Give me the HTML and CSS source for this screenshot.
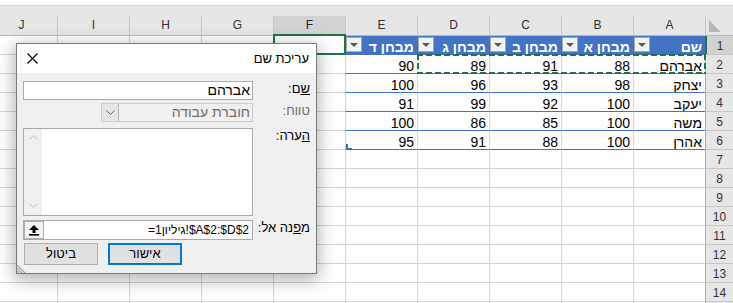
FILE: index.html
```html
<!DOCTYPE html>
<html lang="he">
<head>
<meta charset="utf-8">
<title>עריכת שם</title>
<link rel="stylesheet" href="styles.css">
</head>
<body>
<div class="sheet">
  <div class="strip"></div>
  <div class="band"></div>
  <div class="row colheads">
    <div class="ch">J</div><div class="ch">I</div><div class="ch">H</div><div class="ch">G</div><div class="ch sel">F</div><div class="ch">E</div><div class="ch">D</div><div class="ch">C</div><div class="ch">B</div><div class="ch">A</div>
    <div class="corner"><span class="tri"></span></div>
  </div>

  <div class="row ovl">
    <div class="c"></div><div class="c"></div><div class="c"></div><div class="c"></div><div class="c"></div>
    <div class="c th"><span class="fbtn"><span class="arr"></span></span><span class="tht">מבחן ד</span></div>
    <div class="c th"><span class="fbtn"><span class="arr"></span></span><span class="tht">מבחן ג</span></div>
    <div class="c th"><span class="fbtn"><span class="arr"></span></span><span class="tht">מבחן ב</span></div>
    <div class="c th"><span class="fbtn"><span class="arr"></span></span><span class="tht">מבחן א</span></div>
    <div class="c th"><span class="fbtn"><span class="arr"></span></span><span class="tht">שם</span></div>
    <div class="rh sel">1</div>
    <div class="cursor"></div>
  </div>

  <div class="row ovl">
    <div class="c"></div><div class="c"></div><div class="c"></div><div class="c"></div><div class="c"></div>
    <div class="c td">90</div><div class="c td">89</div><div class="c td">91</div><div class="c td">88</div><div class="c td">אברהם</div>
    <div class="rh">2</div>
    <div class="ants"></div>
  </div>

  <div class="row">
    <div class="c"></div><div class="c"></div><div class="c"></div><div class="c"></div><div class="c"></div>
    <div class="c td">100</div><div class="c td">96</div><div class="c td">93</div><div class="c td">98</div><div class="c td">יצחק</div>
    <div class="rh">3</div>
  </div>

  <div class="row">
    <div class="c"></div><div class="c"></div><div class="c"></div><div class="c"></div><div class="c"></div>
    <div class="c td">91</div><div class="c td">99</div><div class="c td">92</div><div class="c td">100</div><div class="c td">יעקב</div>
    <div class="rh">4</div>
  </div>

  <div class="row">
    <div class="c"></div><div class="c"></div><div class="c"></div><div class="c"></div><div class="c"></div>
    <div class="c td">100</div><div class="c td">86</div><div class="c td">85</div><div class="c td">100</div><div class="c td">משה</div>
    <div class="rh">5</div>
  </div>

  <div class="row">
    <div class="c"></div><div class="c"></div><div class="c"></div><div class="c"></div><div class="c"></div>
    <div class="c td corner-cell">95</div><div class="c td">91</div><div class="c td">88</div><div class="c td">100</div><div class="c td">אהרן</div>
    <div class="rh">6</div>
  </div>

  <div class="row"><div class="c"></div><div class="c"></div><div class="c"></div><div class="c"></div><div class="c"></div><div class="c"></div><div class="c"></div><div class="c"></div><div class="c"></div><div class="c"></div><div class="rh">7</div></div>
  <div class="row"><div class="c"></div><div class="c"></div><div class="c"></div><div class="c"></div><div class="c"></div><div class="c"></div><div class="c"></div><div class="c"></div><div class="c"></div><div class="c"></div><div class="rh">8</div></div>
  <div class="row"><div class="c"></div><div class="c"></div><div class="c"></div><div class="c"></div><div class="c"></div><div class="c"></div><div class="c"></div><div class="c"></div><div class="c"></div><div class="c"></div><div class="rh">9</div></div>
  <div class="row"><div class="c"></div><div class="c"></div><div class="c"></div><div class="c"></div><div class="c"></div><div class="c"></div><div class="c"></div><div class="c"></div><div class="c"></div><div class="c"></div><div class="rh">10</div></div>
  <div class="row"><div class="c"></div><div class="c"></div><div class="c"></div><div class="c"></div><div class="c"></div><div class="c"></div><div class="c"></div><div class="c"></div><div class="c"></div><div class="c"></div><div class="rh">11</div></div>
  <div class="row"><div class="c"></div><div class="c"></div><div class="c"></div><div class="c"></div><div class="c"></div><div class="c"></div><div class="c"></div><div class="c"></div><div class="c"></div><div class="c"></div><div class="rh">12</div></div>
  <div class="row"><div class="c"></div><div class="c"></div><div class="c"></div><div class="c"></div><div class="c"></div><div class="c"></div><div class="c"></div><div class="c"></div><div class="c"></div><div class="c"></div><div class="rh">13</div></div>
  <div class="row"><div class="c"></div><div class="c"></div><div class="c"></div><div class="c"></div><div class="c"></div><div class="c"></div><div class="c"></div><div class="c"></div><div class="c"></div><div class="c"></div><div class="rh">14</div></div>
  <div class="row"><div class="c"></div><div class="c"></div><div class="c"></div><div class="c"></div><div class="c"></div><div class="c"></div><div class="c"></div><div class="c"></div><div class="c"></div><div class="c"></div><div class="rh"></div></div>
</div>

<div class="dialog" dir="rtl">
  <div class="titlebar">
    <span class="title">עריכת שם</span>
    <svg class="close" width="11" height="11" viewBox="0 0 11 11"><path d="M0.5 0.5L10.5 10.5M10.5 0.5L0.5 10.5" stroke="#000" stroke-width="1.1" fill="none"/></svg>
  </div>
  <div class="form">
    <div class="frow r-name">
      <span class="lbl"><u>ש</u>ם:</span>
      <div class="input">אברהם</div>
    </div>
    <div class="frow r-scope">
      <span class="lbl dis">טווח:</span>
      <div class="combo">
        <span class="combo-text">חוברת עבודה</span>
        <span class="combo-btn"><svg width="9" height="5" viewBox="0 0 9 5"><path d="M0.5 0.5L4.5 4.5L8.5 0.5" stroke="#606060" stroke-width="1" fill="none"/></svg></span>
      </div>
    </div>
    <div class="frow r-comment">
      <span class="lbl"><u>ה</u>ערה:</span>
      <div class="textarea">
        <div class="vscroll">
          <svg width="9" height="5" viewBox="0 0 9 5"><path d="M0.5 4.5L4.5 0.5L8.5 4.5" stroke="#c2c2c2" stroke-width="1" fill="none"/></svg>
          <svg width="9" height="5" viewBox="0 0 9 5"><path d="M0.5 0.5L4.5 4.5L8.5 0.5" stroke="#c2c2c2" stroke-width="1" fill="none"/></svg>
        </div>
      </div>
    </div>
    <div class="frow r-refers">
      <span class="lbl">מ<u>פ</u>נה אל:</span>
      <div class="refbox">
        <span class="reftext" dir="ltr">=גיליון1!$A$2:$D$2</span>
        <span class="colbtn"><svg width="10" height="11" viewBox="0 0 10 11"><path d="M5 0L10 5H6.5V8H3.5V5H0Z" fill="#000"/><rect x="0" y="9" width="10" height="1.6" fill="#000"/></svg></span>
      </div>
    </div>
    <div class="btns">
      <span class="btn ok">אישור</span>
      <span class="btn">ביטול</span>
    </div>
  </div>
  <svg class="grip" width="10" height="10" viewBox="0 0 10 10"><path d="M0 2L8 10M0 5L5 10M0 8L2 10" stroke="#a8a8a8" stroke-width="1.2" fill="none"/></svg>
</div>
</body>
</html>
```

FILE: styles.css
```css
* { box-sizing: border-box; }
html, body { margin: 0; padding: 0; }
body {
  width: 733px;
  height: 303px;
  overflow: hidden;
  background: #fff;
  font-family: "Liberation Sans", "DejaVu Sans", Arial, sans-serif;
  position: relative;
}
.sheet { width: 733px; height: 303px; overflow: hidden; }
.strip { height: 6px; background: #fff; border-bottom: 1px solid #d5d5d5; }
.band { height: 10px; background: #e6e6e6; }

.row {
  display: grid;
  grid-template-columns: repeat(10, 72px) 28px;
  width: 748px;
  margin-left: -15px;
}
.row.ovl { position: relative; }

.ch {
  height: 20px;
  background: #e6e6e6;
  border-left: 1px solid #c6c6c6;
  border-bottom: 1px solid #b9b9b9;
  text-align: center;
  font-size: 12px;
  line-height: 19px;
  color: #333;
}
.ch.sel { background: #d2d2d2; color: #222; }
.corner {
  height: 20px;
  background: #e6e6e6;
  border-left: 1px solid #c6c6c6;
  border-bottom: 1px solid #b9b9b9;
  position: relative;
}
.tri {
  position: absolute;
  left: 3px;
  top: 4px;
  width: 0; height: 0;
  border-bottom: 12px solid #b7b7b7;
  border-right: 12px solid transparent;
}

.c {
  height: 19px;
  border-left: 1px solid #d4d4d4;
  border-bottom: 1px solid #d4d4d4;
  font-size: 14px;
  line-height: 16px;
  padding: 3px 3px 0 2px;
  text-align: right;
  white-space: nowrap;
  overflow: hidden;
  color: #000;
}
.td { border-bottom-color: #4472c4; }
.corner-cell { position: relative; overflow: visible; }
.corner-cell::after {
  content: "";
  position: absolute;
  left: 0;
  bottom: -1px;
  width: 4px;
  height: 4px;
  border-left: 2px solid #3e68b8;
  border-bottom: 2px solid #3e68b8;
}
.th {
  background: #4472c4;
  border-left-color: #4472c4;
  border-bottom-color: #4472c4;
  color: #fff;
  font-weight: bold;
  display: flex;
  align-items: flex-start;
  padding: 0 3px 0 0;
}
.tht { margin-left: auto; padding-top: 3px; }
.fbtn {
  width: 16px;
  height: 15px;
  margin-top: 1px;
  background: #f3f3f3;
  border: 1px solid #a9a9a9;
  display: flex;
  align-items: center;
  justify-content: center;
}
.arr {
  width: 0; height: 0;
  border-left: 4px solid transparent;
  border-right: 4px solid transparent;
  border-top: 4px solid #5a5a5a;
}

.rh {
  height: 19px;
  background: #e6e6e6;
  border-left: 1px solid #ababab;
  border-bottom: 1px solid #c6c6c6;
  text-align: center;
  font-size: 12px;
  line-height: 18px;
  padding-top: 1px;
  color: #333;
}
.rh.sel { background: #d2d2d2; border-left: 2px solid #217346; }

.cursor {
  position: absolute;
  left: 288px;
  top: -2px;
  width: 73px;
  height: 21px;
  border: 2px solid #217346;
  z-index: 2;
}
.ants {
  position: absolute;
  left: 432px;
  top: -1px;
  width: 289px;
  height: 20px;
  z-index: 2;
  background:
    repeating-linear-gradient(90deg, #217346 0 6px, transparent 6px 9px) left top / 100% 2px no-repeat,
    repeating-linear-gradient(90deg, #217346 0 6px, transparent 6px 9px) left bottom / 100% 2px no-repeat,
    repeating-linear-gradient(180deg, #217346 0 6px, transparent 6px 9px) left top / 2px 100% no-repeat,
    repeating-linear-gradient(180deg, #217346 0 6px, transparent 6px 9px) right top / 2px 100% no-repeat;
}

/* dialog */
.dialog {
  position: absolute;
  left: 16px;
  top: 43px;
  width: 301px;
  height: 231px;
  border: 1px solid #7a7a7a;
  background: #f0f0f0;
  box-shadow: 0 4px 16px 2px rgba(0, 0, 0, 0.3);
  display: flex;
  flex-direction: column;
  font-family: "Liberation Sans", "DejaVu Sans", Arial, sans-serif;
  font-size: 13px;
  color: #000;
  z-index: 5;
}
.titlebar {
  height: 30px;
  background: #fff;
  display: flex;
  align-items: center;
  justify-content: space-between;
  padding: 0 7px 0 10px;
}
.title { font-size: 13px; }
.close { display: block; }

.form {
  flex: 1;
  display: flex;
  flex-direction: column;
  padding: 8px 6px 8px 6px;
}
.frow { display: flex; align-items: flex-start; }
.lbl {
  width: 57px;
  flex: none;
  line-height: 15px;
  white-space: nowrap;
}
.lbl.dis { color: #6d6d6d; }
.r-name { height: 19px; }
.r-scope { height: 19px; margin-top: 3px; }
.r-comment { height: 88px; margin-top: 6px; }
.r-refers { height: 20px; margin-top: 4px; }

.input {
  width: 230px;
  height: 19px;
  background: #fff;
  border: 1px solid #a9a9a9;
  padding: 0 2px;
  line-height: 17px;
  font-size: 14px;
}
.combo {
  width: 152px;
  height: 19px;
  border: 1px solid #cccccc;
  background: #f0f0f0;
  display: flex;
}
.combo-text {
  flex: 1;
  padding: 0 2px;
  line-height: 17px;
  color: #6d6d6d;
  font-size: 14px;
}
.combo-btn {
  width: 17px;
  border-right: 1px solid #b5b5b5;
  background: #e6e6e6;
  display: flex;
  align-items: center;
  justify-content: center;
}
.combo-btn svg { display: block; }
.textarea {
  width: 230px;
  height: 88px;
  background: #fff;
  border: 1px solid #a9a9a9;
  display: flex;
  justify-content: flex-end;
}
.vscroll {
  width: 18px;
  background: #f0f0f0;
  display: flex;
  flex-direction: column;
  justify-content: space-between;
  align-items: center;
  padding: 6px 0 7px;
}
.vscroll svg { display: block; }
.refbox {
  width: 230px;
  height: 20px;
  background: #fff;
  border: 1px solid #a9a9a9;
  display: flex;
}
.reftext {
  flex: 1;
  text-align: right;
  padding: 0 3px;
  line-height: 18px;
  font-size: 12px;
  white-space: nowrap;
}
.colbtn {
  width: 20px;
  background: #f4f4f4;
  border: 1px solid #b0b0b0;
  display: flex;
  align-items: center;
  justify-content: center;
}
.colbtn svg { display: block; }
.btns {
  height: 22px;
  margin-top: 3px;
  display: flex;
  justify-content: flex-end;
  gap: 10px;
  padding-left: 1px;
}
.btn {
  width: 74px;
  height: 22px;
  background: #e1e1e1;
  border: 1px solid #adadad;
  text-align: center;
  line-height: 20px;
  font-size: 13px;
}
.btn.ok { border: 2px solid #0078d7; line-height: 18px; }
.grip {
  position: absolute;
  left: 0;
  bottom: 0;
  display: block;
}
```
